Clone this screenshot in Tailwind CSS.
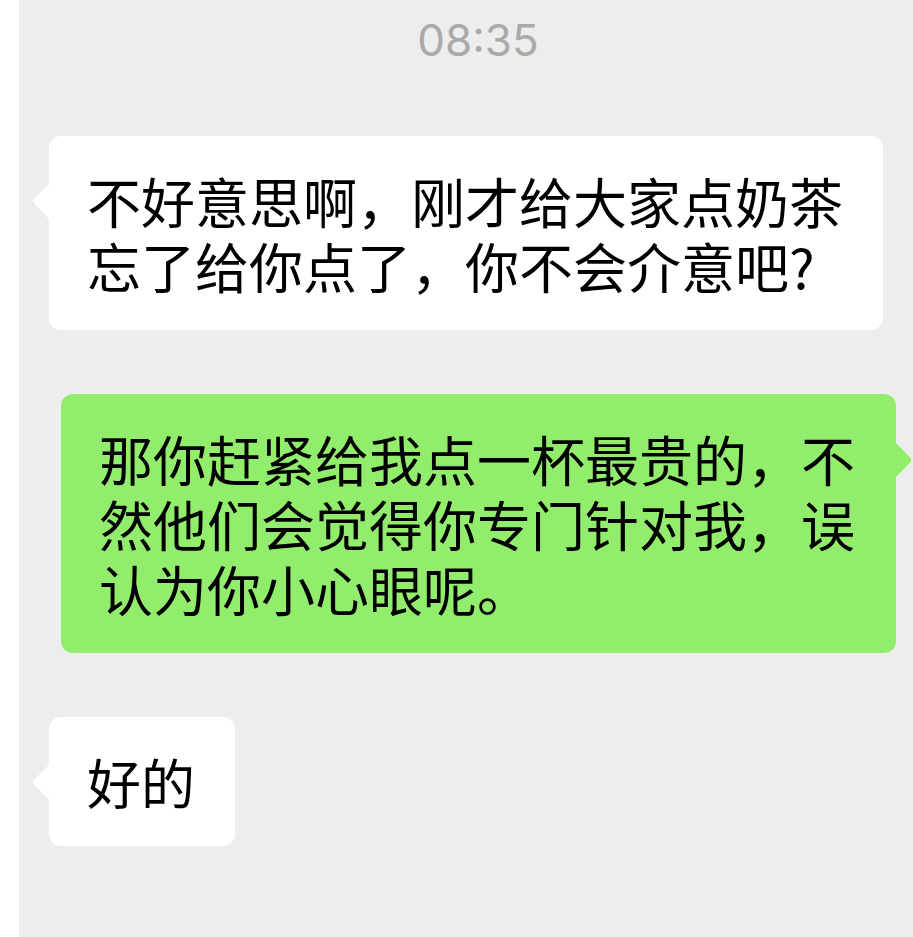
<!DOCTYPE html>
<html lang="zh-CN">

<head>
  <meta charset="UTF-8">
  <meta name="viewport" content="width=device-width, initial-scale=1.0">
  <title>聊天记录</title>
  <script src="https://cdn.jsdelivr.net/npm/@tailwindcss/browser@4"></script>
</head>

<body class="bg-white min-h-screen flex pl-[19px]">
  <main
    class="flex-1 min-w-0 bg-[#ededed] pt-2 pb-16 font-['Noto_Sans_CJK_SC',sans-serif] text-[54px] leading-[65px] text-black">
    <div class="text-center pl-6">
      <time datetime="08:35"
        class="block font-['Inter',sans-serif] text-[44px] leading-16 text-[#aaaaaa]">08:35</time>
    </div>

    <div class="flex flex-col gap-16 pt-16">
      <!-- Received -->
      <div class="flex justify-start px-[30px]">
        <div class="relative bg-white rounded-xl pl-[38px] pr-10 py-8">
          <svg class="absolute right-full top-12 w-4 h-9" viewBox="0 0 16 36" fill="#ffffff" aria-hidden="true">
            <path d="M16 0L1.2 14.8Q-.8 17 1.2 19.2L16 35Z" />
          </svg>
          <p>不好意思啊，刚才给大家点奶茶忘了给你点了，你不会介意吧?</p>
        </div>
      </div>

      <!-- Sent -->
      <div class="flex justify-end pl-[42px] pr-[17px]">
        <div class="relative bg-[#93ed6c] rounded-xl pl-[38px] pr-10 py-8">
          <svg class="absolute left-full top-12 w-4 h-9" viewBox="0 0 16 36" fill="#93ed6c" aria-hidden="true">
            <path d="M0 1L14.4 15.8Q16.4 18 14.4 20.2L0 35Z" />
          </svg>
          <p>那你赶紧给我点一杯最贵的，不然他们会觉得你专门针对我，误认为你小心眼呢。</p>
        </div>
      </div>

      <!-- Received -->
      <div class="flex justify-start px-[30px]">
        <div class="relative bg-white rounded-xl pl-[38px] pr-10 py-8">
          <svg class="absolute right-full top-12 w-4 h-9" viewBox="0 0 16 36" fill="#ffffff" aria-hidden="true">
            <path d="M16 0L1.2 14.8Q-.8 17 1.2 19.2L16 35Z" />
          </svg>
          <p>好的</p>
        </div>
      </div>
    </div>
  </main>
</body>

</html>
